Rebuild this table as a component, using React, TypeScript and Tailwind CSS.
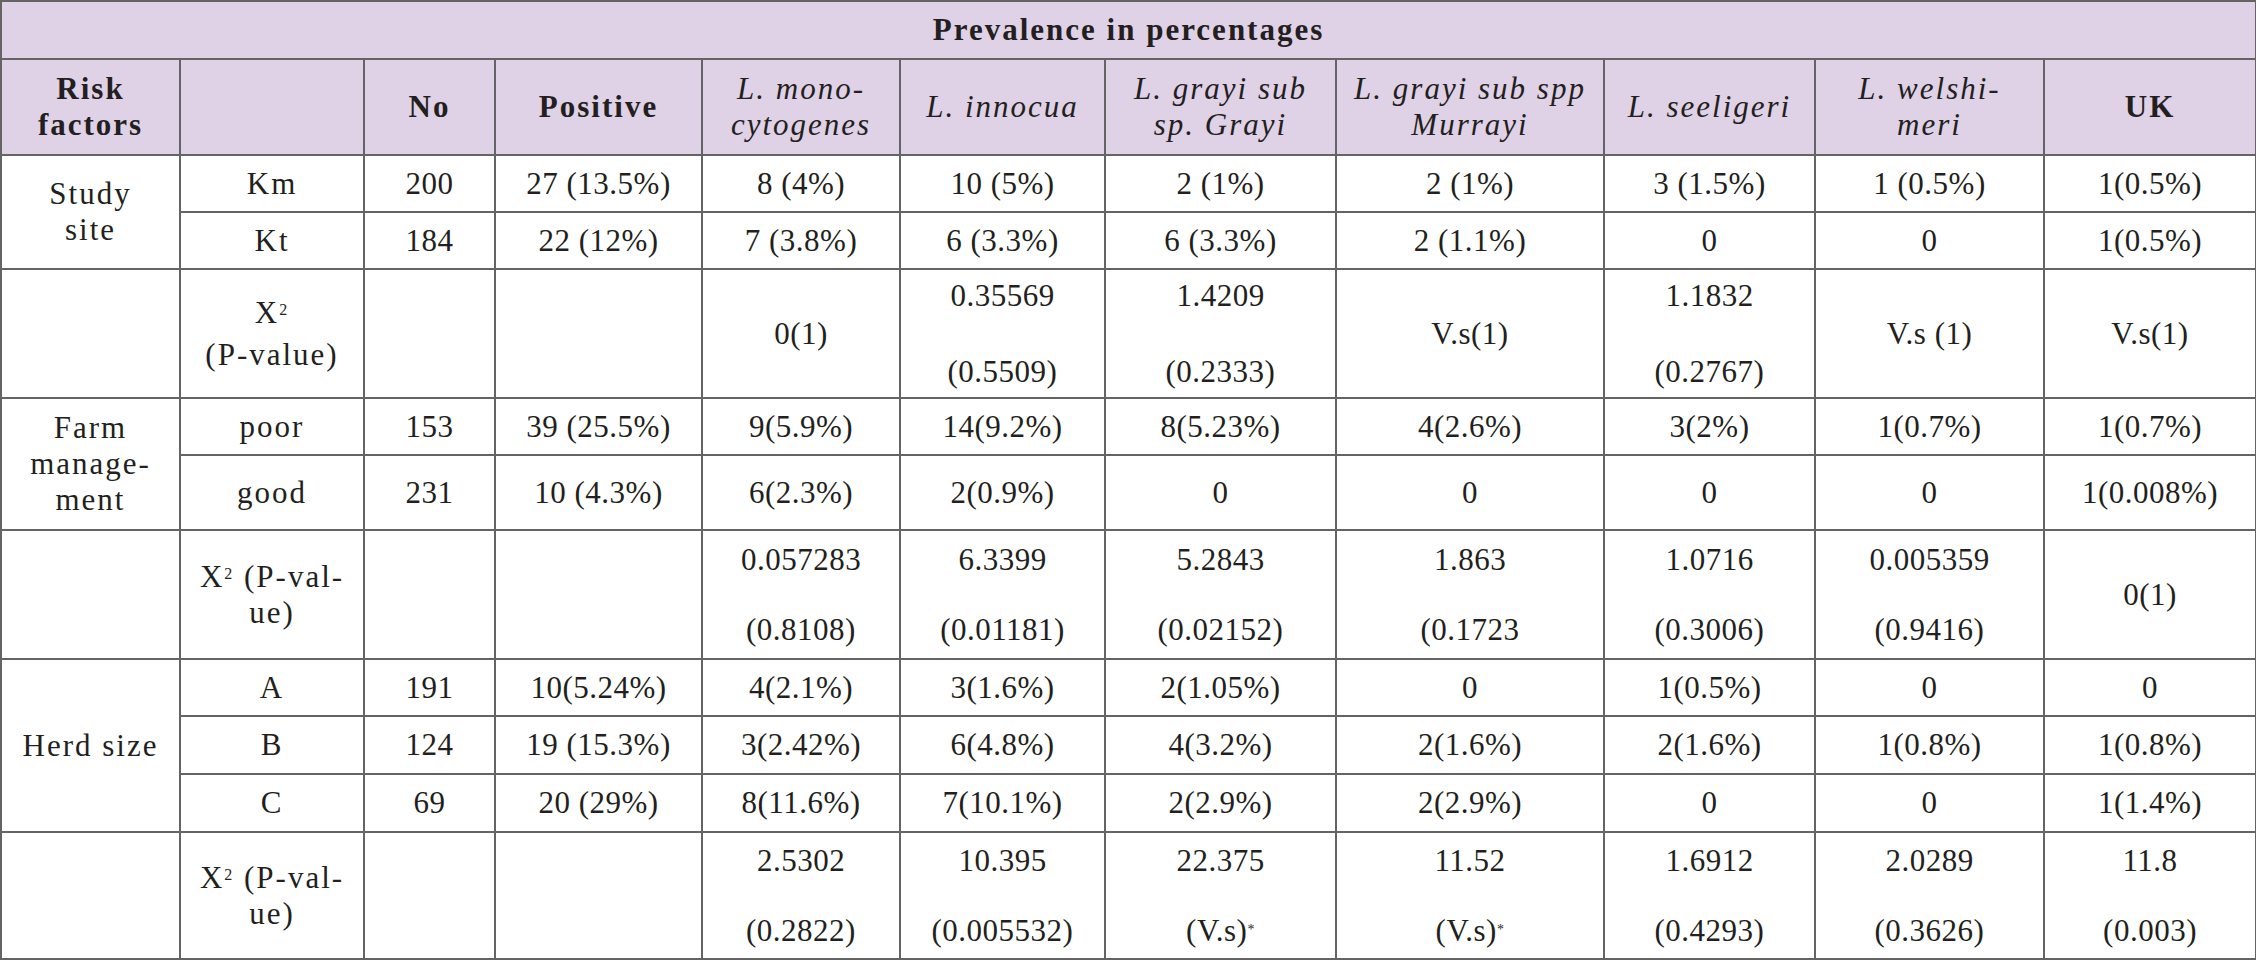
import type { ReactNode } from "react";

type Value = string | [string, string];

type Group = {
  label: ReactNode;
  rows: { name: string; values: string[]; height: string }[];
  test: { label: ReactNode; values: Value[]; gap: string; height: string };
};

const colWidths = [179, 184, 131, 207, 198, 205, 231, 268, 211, 229, 212];

const border = "border-2 border-[#646464]";
const word = "tracking-[2px]";
const num = "tracking-[0.5px]";

const groups: Group[] = [
  {
    label: (
      <>
        Study
        <br />
        site
      </>
    ),
    rows: [
      {
        name: "Km",
        height: "h-[57px]",
        values: ["200", "27 (13.5%)", "8 (4%)", "10 (5%)", "2 (1%)", "2 (1%)", "3 (1.5%)", "1 (0.5%)", "1(0.5%)"],
      },
      {
        name: "Kt",
        height: "h-[57px]",
        values: ["184", "22 (12%)", "7 (3.8%)", "6 (3.3%)", "6 (3.3%)", "2 (1.1%)", "0", "0", "1(0.5%)"],
      },
    ],
    test: {
      label: (
        <span className="leading-[42px]">
          Χ<sup className="text-[16px]">2</sup>
          <br />
          (P-value)
        </span>
      ),
      height: "h-[129px]",
      gap: "gap-[40px]",
      values: ["", "", "0(1)", ["0.35569", "(0.5509)"], ["1.4209", "(0.2333)"], "V.s(1)", ["1.1832", "(0.2767)"], "V.s (1)", "V.s(1)"],
    },
  },
  {
    label: (
      <>
        Farm
        <br />
        manage-
        <br />
        ment
      </>
    ),
    rows: [
      {
        name: "poor",
        height: "h-[57px]",
        values: ["153", "39 (25.5%)", "9(5.9%)", "14(9.2%)", "8(5.23%)", "4(2.6%)", "3(2%)", "1(0.7%)", "1(0.7%)"],
      },
      {
        name: "good",
        height: "h-[75px]",
        values: ["231", "10 (4.3%)", "6(2.3%)", "2(0.9%)", "0", "0", "0", "0", "1(0.008%)"],
      },
    ],
    test: {
      label: (
        <span className="leading-[36px]">
          Χ<sup className="text-[16px]">2</sup> (P-val-
          <br />
          ue)
        </span>
      ),
      height: "h-[129px]",
      gap: "gap-[34px]",
      values: [
        "",
        "",
        ["0.057283", "(0.8108)"],
        ["6.3399", "(0.01181)"],
        ["5.2843", "(0.02152)"],
        ["1.863", "(0.1723"],
        ["1.0716", "(0.3006)"],
        ["0.005359", "(0.9416)"],
        "0(1)",
      ],
    },
  },
  {
    label: "Herd size",
    rows: [
      {
        name: "A",
        height: "h-[57px]",
        values: ["191", "10(5.24%)", "4(2.1%)", "3(1.6%)", "2(1.05%)", "0", "1(0.5%)", "0", "0"],
      },
      {
        name: "B",
        height: "h-[58px]",
        values: ["124", "19 (15.3%)", "3(2.42%)", "6(4.8%)", "4(3.2%)", "2(1.6%)", "2(1.6%)", "1(0.8%)", "1(0.8%)"],
      },
      {
        name: "C",
        height: "h-[58px]",
        values: ["69", "20 (29%)", "8(11.6%)", "7(10.1%)", "2(2.9%)", "2(2.9%)", "0", "0", "1(1.4%)"],
      },
    ],
    test: {
      label: (
        <span className="leading-[36px]">
          Χ<sup className="text-[16px]">2</sup> (P-val-
          <br />
          ue)
        </span>
      ),
      height: "h-[127px]",
      gap: "gap-[34px]",
      values: [
        "",
        "",
        ["2.5302", "(0.2822)"],
        ["10.395", "(0.005532)"],
        ["22.375", "(V.s)*"],
        ["11.52", "(V.s)*"],
        ["1.6912", "(0.4293)"],
        ["2.0289", "(0.3626)"],
        ["11.8", "(0.003)"],
      ],
    },
  },
];

function Text({ value }: { value: string }) {
  if (value.endsWith("*")) {
    return (
      <>
        {value.slice(0, -1)}
        <sup className="text-[14px]">*</sup>
      </>
    );
  }
  return <>{value}</>;
}

function ValueCell({ value, gap }: { value: Value; gap: string }) {
  return (
    <td className={`${border} ${num} px-1 text-center align-middle`}>
      {Array.isArray(value) ? (
        <div className={`flex flex-col items-center ${gap}`}>
          <span>{value[0]}</span>
          <span>
            <Text value={value[1]} />
          </span>
        </div>
      ) : (
        <Text value={value} />
      )}
    </td>
  );
}

const headers: { text: ReactNode; italic?: boolean }[] = [
  { text: "No" },
  { text: "Positive" },
  {
    text: (
      <>
        L. mono-
        <br />
        cytogenes
      </>
    ),
    italic: true,
  },
  { text: "L. innocua", italic: true },
  {
    text: (
      <>
        L. grayi sub
        <br />
        sp. Grayi
      </>
    ),
    italic: true,
  },
  {
    text: (
      <>
        L. grayi sub spp
        <br />
        Murrayi
      </>
    ),
    italic: true,
  },
  { text: "L. seeligeri", italic: true },
  {
    text: (
      <>
        L. welshi-
        <br />
        meri
      </>
    ),
    italic: true,
  },
  { text: "UK" },
];

export default function App() {
  return (
    <div className="h-[960px] w-[2256px] overflow-hidden bg-white font-['Liberation_Serif',serif] text-[31px] leading-[36px] text-[#231f20]">
      <table className="w-[2255px] table-fixed border-collapse">
        <colgroup>
          {colWidths.map((w, i) => (
            <col key={i} style={{ width: w }} />
          ))}
        </colgroup>
        <thead>
          <tr className="h-[58px] bg-[#dfd1e6]">
            <th colSpan={11} className={`${border} ${word} text-center font-bold`}>
              Prevalence in percentages
            </th>
          </tr>
          <tr className="h-[96px] bg-[#dfd1e6]">
            <th className={`${border} ${word} px-1 text-center font-bold`}>
              Risk
              <br />
              factors
            </th>
            <th className={border} />
            {headers.map((h, i) => (
              <th
                key={i}
                className={`${border} ${word} px-1 text-center ${h.italic ? "font-normal italic" : "font-bold"}`}
              >
                {h.text}
              </th>
            ))}
          </tr>
        </thead>
        <tbody>
          {groups.map((g, gi) => (
            <>
              {g.rows.map((r, ri) => (
                <tr key={`${gi}-${ri}`} className={r.height}>
                  {ri === 0 && (
                    <td rowSpan={g.rows.length} className={`${border} ${word} px-1 text-center`}>
                      {g.label}
                    </td>
                  )}
                  <td className={`${border} ${word} text-center`}>{r.name}</td>
                  {r.values.map((v, vi) => (
                    <ValueCell key={vi} value={v} gap="" />
                  ))}
                </tr>
              ))}
              <tr key={`${gi}-test`} className={g.test.height}>
                <td className={border} />
                <td className={`${border} ${word} text-center`}>{g.test.label}</td>
                {g.test.values.map((v, vi) => (
                  <ValueCell key={vi} value={v} gap={g.test.gap} />
                ))}
              </tr>
            </>
          ))}
        </tbody>
      </table>
    </div>
  );
}
